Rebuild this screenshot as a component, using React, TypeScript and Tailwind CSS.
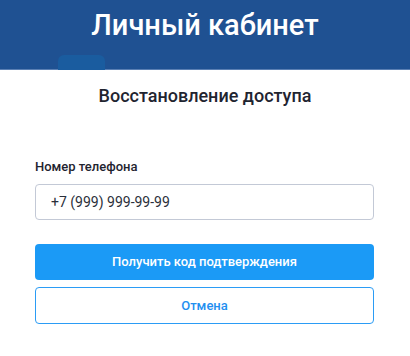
export default function App() {
  return (
    <div
      className="relative h-[356px] w-[410px] overflow-hidden bg-white"
      style={{ fontFamily: "Roboto, 'Liberation Sans', sans-serif" }}
    >
      <header className="relative h-[70px] border-b border-[#5a7fb3] bg-[#1f5192]">
        <div className="absolute left-[58px] top-[55px] h-[15px] w-[47px] rounded-t-[6px] bg-[#1a5c9f]" />
        <h1 className="pt-[6px] text-center text-[29px] font-medium leading-[38px] text-white">
          Личный кабинет
        </h1>
      </header>

      <main className="px-[35px]">
        <h2 className="mt-[13px] text-center text-[18px] font-medium leading-[26px] text-[#1f2430]">
          Восстановление доступа
        </h2>

        <label className="mt-[49px] block text-[13px] font-medium leading-[18px] text-[#1f2430]">
          Номер телефона
        </label>
        <div className="mt-[8px] flex h-[36px] w-[339px] items-center rounded-[4px] border border-[#c3c9d6] px-[15px] text-[14px] text-[#2a2f3a]">
          +7 (999) 999-99-99
        </div>

        <button className="mt-[24px] flex h-[36px] w-[339px] items-center justify-center rounded-[4px] bg-[#1b9af6] text-[13px] font-medium text-white">
          Получить код подтверждения
        </button>
        <button className="mt-[7px] flex h-[37px] w-[339px] items-center justify-center rounded-[4px] border border-[#2b9cf5] bg-white text-[13px] font-medium text-[#1f8ff0]">
          Отмена
        </button>
      </main>
    </div>
  );
}
